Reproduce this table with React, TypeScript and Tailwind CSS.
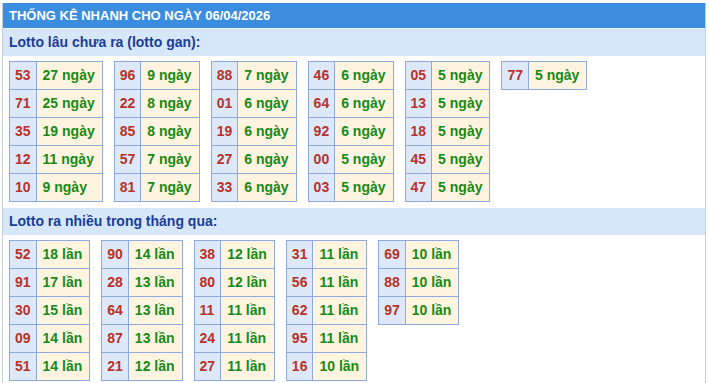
const gan: [string, string][][] = [
  [["53", "27 ngày"], ["71", "25 ngày"], ["35", "19 ngày"], ["12", "11 ngày"], ["10", "9 ngày"]],
  [["96", "9 ngày"], ["22", "8 ngày"], ["85", "8 ngày"], ["57", "7 ngày"], ["81", "7 ngày"]],
  [["88", "7 ngày"], ["01", "6 ngày"], ["19", "6 ngày"], ["27", "6 ngày"], ["33", "6 ngày"]],
  [["46", "6 ngày"], ["64", "6 ngày"], ["92", "6 ngày"], ["00", "5 ngày"], ["03", "5 ngày"]],
  [["05", "5 ngày"], ["13", "5 ngày"], ["18", "5 ngày"], ["45", "5 ngày"], ["47", "5 ngày"]],
  [["77", "5 ngày"]],
];

const nhieu: [string, string][][] = [
  [["52", "18 lần"], ["91", "17 lần"], ["30", "15 lần"], ["09", "14 lần"], ["51", "14 lần"]],
  [["90", "14 lần"], ["28", "13 lần"], ["64", "13 lần"], ["87", "13 lần"], ["21", "12 lần"]],
  [["38", "12 lần"], ["80", "12 lần"], ["11", "11 lần"], ["24", "11 lần"], ["27", "11 lần"]],
  [["31", "11 lần"], ["56", "11 lần"], ["62", "11 lần"], ["95", "11 lần"], ["16", "10 lần"]],
  [["69", "10 lần"], ["88", "10 lần"], ["97", "10 lần"]],
];

const StatTable = ({ rows }: { rows: [string, string][] }) => (
  <table className="border-collapse self-start">
    <tbody>
      {rows.map(([num, val]) => (
        <tr key={num} className="h-[28px]">
          <td className="border border-[#8fa9dc] bg-[#dde9f8] px-[5px] text-[#b8322a]">{num}</td>
          <td className="border border-[#8fa9dc] bg-[#fff4e0] pl-[6px] pr-[7px] text-[#178a17]">{val}</td>
        </tr>
      ))}
    </tbody>
  </table>
);

const Section = ({ title, tables }: { title: string; tables: [string, string][][] }) => (
  <>
    <div className="h-[27px] bg-[#d6e7fa] pl-[6px] text-[14px] font-bold leading-[27px] text-[#1a3d99]">{title}</div>
    <div className="flex gap-[11px] px-[6px] pb-[6px] pt-[5px] text-[14px] font-bold">
      {tables.map((t, i) => (
        <StatTable key={i} rows={t} />
      ))}
    </div>
  </>
);

export default function App() {
  return (
    <div className="bg-white pl-[2px] pt-[3px] font-['Liberation_Sans',Arial,sans-serif]">
      <div className="w-[704px] border-x border-[#c9cfd8]">
        <div className="h-[25px] bg-[#3a8ddf] pl-[6px] text-[13px] font-bold leading-[25px] text-white">
          THỐNG KÊ NHANH CHO NGÀY 06/04/2026
        </div>
        <div className="h-px bg-[#eef4fc]" />
        <Section title="Lotto lâu chưa ra (lotto gan):" tables={gan} />
        <Section title="Lotto ra nhiều trong tháng qua:" tables={nhieu} />
      </div>
    </div>
  );
}
